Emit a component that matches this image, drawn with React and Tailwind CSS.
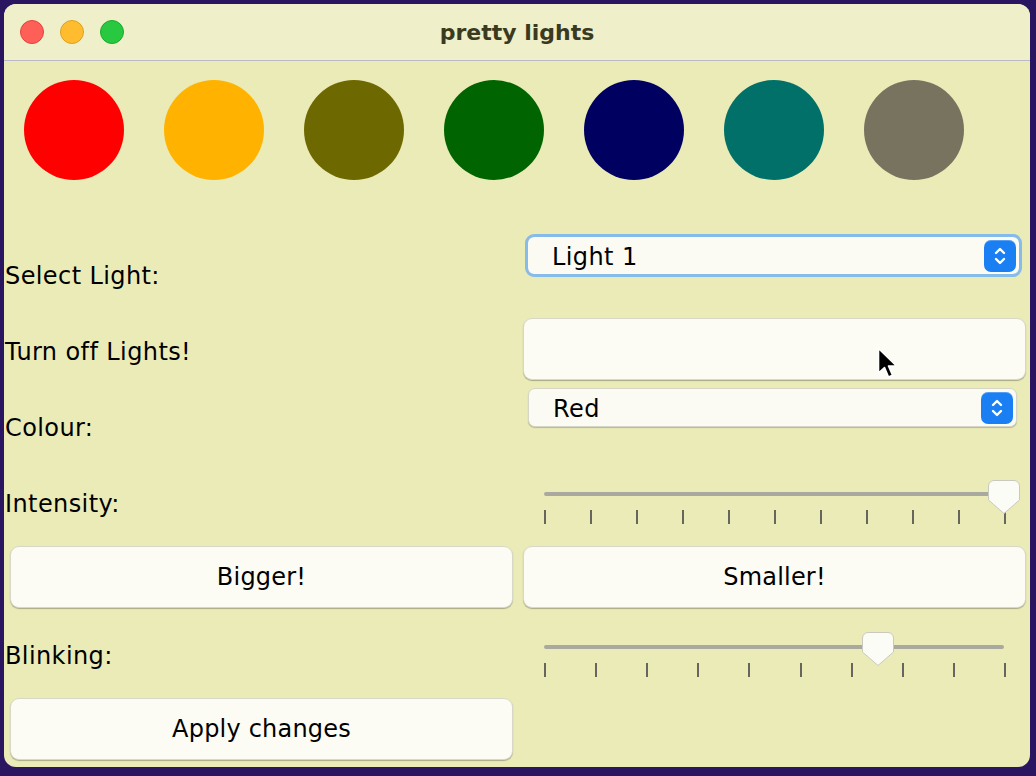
import React from 'react';

const font = { fontFamily: '"DejaVu Sans", "Noto Sans", sans-serif' };

const lights = ['#ff0000', '#ffb300', '#6e6800', '#006400', '#000060', '#007068', '#78735f'];

const Chevrons = () => (
  <svg width="14" height="22" viewBox="0 0 14 22" fill="none" stroke="white" strokeWidth="2.4" strokeLinecap="round" strokeLinejoin="round">
    <path d="M3 8 L7 4 L11 8" />
    <path d="M3 14 L7 18 L11 14" />
  </svg>
);

const Combo = ({ label, focused, className }) => (
  <div
    className={`flex items-center justify-between bg-[#fbfbf4] rounded-[7px] border border-[#d6d6c6] shadow-[0_1px_1px_rgba(0,0,0,0.22)] ${
      focused ? 'outline-[3px] outline outline-[#86bbea] -outline-offset-1' : ''
    } ${className}`}
  >
    <span className="pl-[24px] pt-[3px] text-[24px] tracking-[0.4px] text-black">{label}</span>
    <div className="mr-[3px] w-[32px] h-[32px] rounded-[7px] bg-[#1a7ff3] flex items-center justify-center shadow-[inset_0_1px_0_rgba(255,255,255,0.25)]">
      <Chevrons />
    </div>
  </div>
);

const Button = ({ children }) => (
  <button className="ml-[6px] mt-[6px] h-[62px] w-[503px] rounded-[9px] bg-[#fcfcf5] border border-[#d8d8c8] shadow-[0_1px_1px_rgba(0,0,0,0.28)] text-[24px] tracking-[0.2px] text-black">
    {children}
  </button>
);

const Thumb = () => (
  <svg width="32" height="34" viewBox="0 0 32 34">
    <path
      d="M6 0.5 H26 A5.5 5.5 0 0 1 31.5 6 V20 L16 33.5 L0.5 20 V6 A5.5 5.5 0 0 1 6 0.5 Z"
      fill="#fcfcf6"
      stroke="#c9c9bf"
    />
  </svg>
);

const Slider = ({ ticks, thumbLeft, padTop }) => (
  <div className={`relative h-[76px] ${padTop}`}>
    <div className="ml-[27px] w-[460px] h-[4px] rounded-full bg-[#a9a9a0]" />
    <div className="ml-[27px] w-[462px] mt-[14px] h-[14px] flex justify-between">
      {Array.from({ length: ticks }).map((_, i) => (
        <div key={i} className="w-[2px] h-[14px] bg-[#66665f]" />
      ))}
    </div>
    <div className="absolute top-[16px]" style={{ left: thumbLeft }}>
      <Thumb />
    </div>
  </div>
);

const Label = ({ children }) => (
  <div className="h-[76px] flex items-center pl-[1px] pt-[3px] text-[24px] tracking-[0.4px] text-black [font-variant-ligatures:none]">
    {children}
  </div>
);

const App = () => {
  return (
    <div className="w-[1036px] h-[776px] bg-[#2a1660] pt-[4px] pl-[4px] overflow-hidden" style={font}>
      <div className="relative w-[1026px] h-[763px] rounded-[12px] overflow-hidden bg-[#ebebb8] flex flex-col">
        {/* title bar */}
        <div className="relative h-[57px] bg-[#efefca] border-b border-[#b9b9c9] flex items-center justify-center shrink-0">
          <div className="absolute left-[16px] top-[16px] flex gap-[16px]">
            <div className="w-[24px] h-[24px] rounded-full bg-[#fe5f57] border border-[#e0443e]" />
            <div className="w-[24px] h-[24px] rounded-full bg-[#febc2e] border border-[#dea123]" />
            <div className="w-[24px] h-[24px] rounded-full bg-[#28c840] border border-[#1aab29]" />
          </div>
          <span className="text-[22px] font-bold text-[#3a3a20]">pretty lights</span>
        </div>

        {/* lights */}
        <div className="h-[175px] shrink-0 flex gap-[40px] pl-[20px] pt-[19px]">
          {lights.map((c, i) => (
            <div key={i} className="w-[100px] h-[100px] rounded-full" style={{ backgroundColor: c }} />
          ))}
        </div>

        {/* controls */}
        <div className="grid grid-cols-2">
          <Label>Select Light:</Label>
          <div className="h-[76px]">
            <Combo label="Light 1" focused className="ml-[10px] w-[493px] h-[39px]" />
          </div>

          <Label>Turn off Lights!</Label>
          <div className="h-[76px]">
            <Button />
          </div>

          <Label>Colour:</Label>
          <div className="h-[76px]">
            <Combo label="Red" className="ml-[11px] w-[489px] h-[39px]" />
          </div>

          <Label>Intensity:</Label>
          <Slider ticks={11} thumbLeft={471} padTop="pt-[28px]" />

          <div className="h-[76px]">
            <Button>Bigger!</Button>
          </div>
          <div className="h-[76px]">
            <Button>Smaller!</Button>
          </div>

          <Label>Blinking:</Label>
          <Slider ticks={10} thumbLeft={345} padTop="pt-[29px]" />

          <div className="h-[76px]">
            <Button>Apply changes</Button>
          </div>
          <div className="h-[76px]" />
        </div>

        {/* mouse pointer */}
        <svg className="absolute left-[873px] top-[343px]" width="22" height="34" viewBox="0 0 22 34">
          <path
            d="M1.5 1.5 L1.5 26 L7.5 20.5 L11.5 30 L15.5 28.3 L11.5 19 L19.5 19 Z"
            fill="black"
            stroke="white"
            strokeWidth="1.6"
            strokeLinejoin="round"
          />
        </svg>
      </div>
    </div>
  );
};

export default App;
